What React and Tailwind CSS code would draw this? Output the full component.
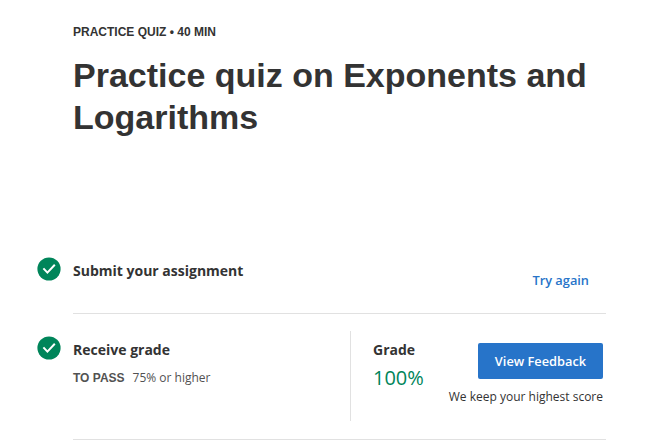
function Check() {
  return (
    <svg className="size-6 shrink-0" viewBox="0 0 24 24" fill="none">
      <circle cx="12" cy="12" r="11.6" fill="#00855a" />
      <path d="M6.4 11.4l4 4.2 7.4-7.9" stroke="#fff" strokeWidth="2" />
    </svg>
  );
}

export default function App() {
  return (
    <main className="h-[444px] w-[662px] overflow-hidden bg-white pl-[37px] font-['Open_Sans',sans-serif] text-[#333]">
      <header className="h-[245px] pl-9 pt-6 font-['Liberation_Sans',sans-serif] font-bold">
        <p className="text-[12px] leading-4">PRACTICE QUIZ • 40 MIN</p>
        <h1 className="mt-3.5 w-[540px] text-[34px] leading-[42px]">Practice quiz on Exponents and Logarithms</h1>
      </header>
      <section className="flex h-[69px]">
        <div className="w-9 pt-3"><Check /></div>
        <div className="flex w-[533px] justify-between border-b border-[#e1e1e1]">
          <h2 className="pt-4 text-[14px] leading-5 font-bold">Submit your assignment</h2>
          <button className="mt-[25px] mr-[17px] h-5 text-[12.8px] leading-5 font-semibold text-[#2774c9]">Try again</button>
        </div>
      </section>
      <section className="flex h-[126px]">
        <div className="w-9 pt-[22px]"><Check /></div>
        <div className="flex w-[533px] border-b border-[#e1e1e1] pt-[17px]">
          <div className="h-[90px] w-[278px] border-r border-[#e1e1e1] pt-[9px]">
            <h2 className="text-[14px] leading-5 font-bold">Receive grade</h2>
            <p className="mt-2 text-[12px] leading-5 text-[#525252]"><span className="mr-2 font-['Liberation_Sans',sans-serif] font-bold">TO PASS</span>75% or higher</p>
          </div>
          <div className="w-[70px] pl-[22px] pt-[9px]">
            <h2 className="text-[14px] leading-5 font-bold">Grade</h2>
            <p className="mt-1 text-[20px] leading-7 text-[#00855a]">100%</p>
          </div>
          <div className="flex flex-1 flex-col items-end pr-[3px] pt-3">
            <button className="h-9 w-[125px] rounded-[2px] bg-[#2774c9] text-[12.8px] leading-4 font-semibold text-white">View Feedback</button>
            <p className="mt-2 text-[12px] leading-5 whitespace-nowrap">We keep your highest score</p>
          </div>
        </div>
      </section>
    </main>
  );
}
